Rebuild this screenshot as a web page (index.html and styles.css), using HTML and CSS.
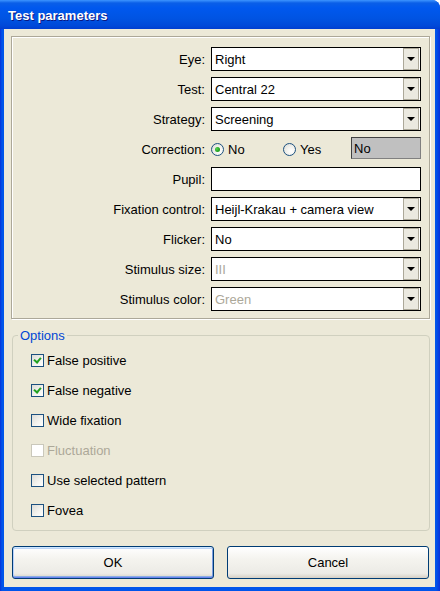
FILE: index.html
```html
<!DOCTYPE html>
<html lang="en">
<head>
    <meta charset="UTF-8">
    <meta name="viewport" content="width=device-width, initial-scale=1.0">
    <title>Test parameters</title>
    <link rel="stylesheet" href="styles.css">
</head>
<body>
    <div class="window">
        <div class="titlebar">
            <span class="title">Test parameters</span>
        </div>

        <div class="client">
            <div class="panel">
                <label class="field-label">Eye:</label>
                <div class="combo"><span class="combo-value">Right</span><span class="combo-arrow"></span></div>

                <label class="field-label">Test:</label>
                <div class="combo"><span class="combo-value">Central 22</span><span class="combo-arrow"></span></div>

                <label class="field-label">Strategy:</label>
                <div class="combo"><span class="combo-value">Screening</span><span class="combo-arrow"></span></div>

                <label class="field-label">Correction:</label>
                <div class="radio-row">
                    <span class="radio-option first"><span class="radio checked"></span>No</span>
                    <span class="radio-option"><span class="radio"></span>Yes</span>
                    <span class="readonly-box">No</span>
                </div>

                <label class="field-label">Pupil:</label>
                <div class="text-input"></div>

                <label class="field-label">Fixation control:</label>
                <div class="combo"><span class="combo-value">Heijl-Krakau + camera view</span><span class="combo-arrow"></span></div>

                <label class="field-label">Flicker:</label>
                <div class="combo"><span class="combo-value">No</span><span class="combo-arrow"></span></div>

                <label class="field-label">Stimulus size:</label>
                <div class="combo disabled"><span class="combo-value">III</span><span class="combo-arrow"></span></div>

                <label class="field-label">Stimulus color:</label>
                <div class="combo disabled"><span class="combo-value">Green</span><span class="combo-arrow"></span></div>
            </div>

            <fieldset class="options">
                <legend>Options</legend>
                <div class="check-list">
                    <div class="check-row"><span class="checkbox checked"></span>False positive</div>
                    <div class="check-row"><span class="checkbox checked"></span>False negative</div>
                    <div class="check-row"><span class="checkbox"></span>Wide fixation</div>
                    <div class="check-row disabled"><span class="checkbox"></span>Fluctuation</div>
                    <div class="check-row"><span class="checkbox"></span>Use selected pattern</div>
                    <div class="check-row"><span class="checkbox"></span>Fovea</div>
                </div>
            </fieldset>

            <div class="buttons">
                <button class="push-button default">OK</button>
                <button class="push-button">Cancel</button>
            </div>
        </div>
    </div>
</body>
</html>
```

FILE: styles.css
```css
body {
    margin: 0;
    padding: 0;
    font-family: "Liberation Sans", Arial, sans-serif;
    font-size: 13px;
    color: #000;
    background-color: #fff;
}

.window {
    width: 440px;
    height: 591px;
    box-sizing: border-box;
    padding: 0 5px 4px 4px;
    display: flex;
    flex-direction: column;
    background: linear-gradient(to right, #0831d9 0, #0055ea 2px, #0055ea 436px, #0831d9 440px);
    border-radius: 0 8px 0 0;
}

.titlebar {
    height: 29px;
    margin: 0 -5px 0 -4px;
    padding-left: 8px;
    display: flex;
    align-items: center;
    border-radius: 0 8px 0 0;
    background: linear-gradient(to bottom, #3d95ff 0, #0a5fe8 3px, #0058ee 8px, #0054e3 18px, #0048d8 26px, #003dd0 29px);
}

.title {
    color: #fff;
    font-weight: bold;
    font-size: 13px;
    text-shadow: 1px 1px 0 #0a1883;
    margin-top: 2px;
}

.client {
    flex: 1;
    background-color: #ece9d8;
    padding: 7px 5px 0 7px;
    display: flex;
    flex-direction: column;
}

.panel {
    display: grid;
    grid-template-columns: 193px 210px;
    grid-auto-rows: 24px;
    column-gap: 6px;
    row-gap: 6px;
    padding: 10px 9px 7px 0;
    border: 1px solid #aca899;
    box-shadow: 1px 1px 0 #fff, inset 1px 1px 0 #fff;
}

.field-label {
    display: flex;
    align-items: center;
    justify-content: flex-end;
}

.combo {
    display: flex;
    align-items: center;
    box-sizing: border-box;
    border: 1px solid #000;
    background-color: #fff;
    padding-left: 3px;
}

.combo-value {
    flex: 1;
}

.combo.disabled .combo-value {
    color: #aca899;
}

.combo-arrow {
    position: relative;
    width: 16px;
    height: 22px;
    box-sizing: border-box;
    margin-right: 1px;
    border: 1px solid #aca899;
    background-color: #ebe9e0;
}

.combo-arrow::after {
    content: "";
    position: absolute;
    left: 3px;
    top: 8px;
    border-left: 4px solid transparent;
    border-right: 4px solid transparent;
    border-top: 4px solid #000;
}

.radio-row {
    display: flex;
    align-items: center;
}

.radio-option {
    display: flex;
    align-items: center;
    width: 72px;
}

.radio {
    width: 13px;
    height: 13px;
    box-sizing: border-box;
    border: 1px solid #1c5180;
    border-radius: 50%;
    margin-right: 4px;
    background: radial-gradient(circle at 65% 65%, #fff 0, #f3f3ef 40%, #d8d8d0 100%);
    position: relative;
}

.radio.checked::after {
    content: "";
    position: absolute;
    left: 3px;
    top: 3px;
    width: 5px;
    height: 5px;
    border-radius: 50%;
    background: radial-gradient(circle at 35% 35%, #55d451, #21a121 60%, #1a8f1a);
}

.readonly-box {
    box-sizing: border-box;
    width: 70px;
    height: 22px;
    margin-left: -4px;
    margin-top: -2px;
    padding-left: 2px;
    display: flex;
    align-items: center;
    background-color: #c0c0c0;
    border: 1px solid #404040;
    border-right-color: #808080;
    border-bottom-color: #808080;
}

.text-input {
    box-sizing: border-box;
    border: 1px solid #000;
    background-color: #fff;
}

.options {
    margin: 9px 0 0 1px;
    padding: 0 5px 5px;
    border: 1px solid #d0d0bf;
    border-radius: 4px;
}

.options legend {
    color: #0046d5;
    padding: 0 2px;
}

.check-list {
    display: flex;
    flex-direction: column;
    padding: 2px 0 0 13px;
}

.check-row {
    height: 30px;
    display: flex;
    align-items: center;
}

.check-row.disabled {
    color: #aca899;
}

.checkbox {
    width: 13px;
    height: 13px;
    box-sizing: border-box;
    border: 1px solid #1c5180;
    margin-right: 3px;
    background: linear-gradient(135deg, #dcdcd7 0, #f4f4f0 60%, #fff 100%);
    position: relative;
}

.check-row.disabled .checkbox {
    border-color: #cac8bb;
    background: #fff;
}

.checkbox.checked::after {
    content: "";
    position: absolute;
    left: 2px;
    top: 1px;
    width: 3px;
    height: 5px;
    border-right: 2px solid #21a121;
    border-bottom: 2px solid #21a121;
    transform: translate(1px, 0) rotate(40deg);
}

.buttons {
    display: flex;
    gap: 13px;
    margin-top: 15px;
    padding-left: 1px;
}

.push-button {
    width: 202px;
    height: 33px;
    font-family: "Liberation Sans", Arial, sans-serif;
    font-size: 13px;
    color: #000;
    border: 1px solid #003c74;
    border-radius: 3px;
    background: linear-gradient(to bottom, #fff 0, #f4f3ee 40%, #ecebe6 85%, #d6d0c5 100%);
    padding: 0;
}

.push-button.default {
    box-shadow: inset 0 1px 0 #cee7ff, inset 0 -1px 0 #6982ee, inset 1px 0 0 #b9d1fc, inset -1px 0 0 #7b9ee0,
        inset 0 2px 0 #bcd4f6, inset 0 -2px 0 #89ade4;
}
```
